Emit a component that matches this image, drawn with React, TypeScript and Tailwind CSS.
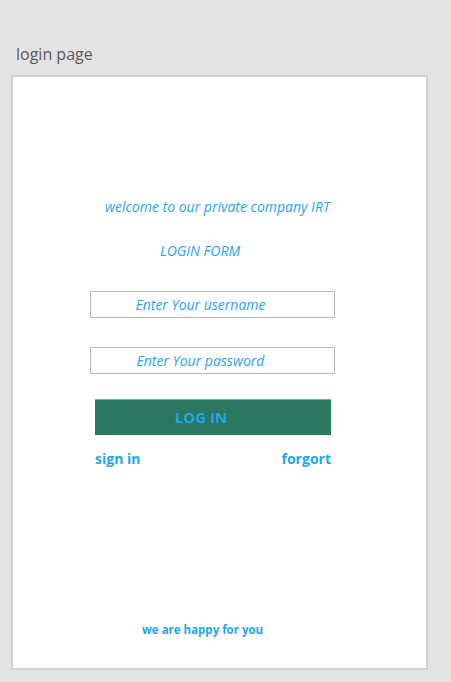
export default function App() {
  return (
    <div className="w-[451px] h-[682px] bg-[#e3e3e3] overflow-hidden" style={{ fontFamily: '"Open Sans", "Noto Sans", sans-serif' }}>
      <div className="pt-[43px] pl-[16px] h-[75px] text-[16px] leading-[22px] text-[#5a5a5a]">login page</div>
      <div className="ml-[11px] w-[417px] h-[595px] bg-white border-2 border-[#d0d0d0] flex flex-col">
        <div className="h-[120px] shrink-0" />
        <div className="pl-[92px] text-[14px] leading-[20px] italic text-[#1fa6ec]">welcome to our private company IRT</div>
        <div className="h-[24px] shrink-0" />
        <div className="pl-[147px] text-[14px] leading-[20px] italic text-[#1fa6ec]">LOGIN FORM</div>
        <div className="h-[30px] shrink-0" />
        <div className="ml-[77px] w-[245px] h-[27px] shrink-0 border border-[#b8b8b8] flex items-center justify-center pr-[24px] text-[14px] italic text-[#1fa6ec]">Enter Your username</div>
        <div className="h-[29px] shrink-0" />
        <div className="ml-[77px] w-[245px] h-[27px] shrink-0 border border-[#b8b8b8] flex items-center justify-center pr-[24px] text-[14px] italic text-[#1fa6ec]">Enter Your password</div>
        <div className="h-[25px] shrink-0" />
        <div className="ml-[82px] w-[236px] h-[36px] shrink-0 bg-[#2b7760] border-t border-[#7fae9e] flex items-center justify-center pr-[24px] text-[15px] font-bold text-[#1fa6ec]">LOG IN</div>
        <div className="h-[14px] shrink-0" />
        <div className="ml-[82px] w-[236px] flex justify-between text-[14px] leading-[20px] font-bold text-[#1fa6ec]">
          <span>sign in</span>
          <span>forgort</span>
        </div>
        <div className="h-[153px] shrink-0" />
        <div className="pl-[129px] text-[11.5px] leading-[16px] font-bold text-[#1fa6ec]">we are happy for you</div>
      </div>
    </div>
  );
}
